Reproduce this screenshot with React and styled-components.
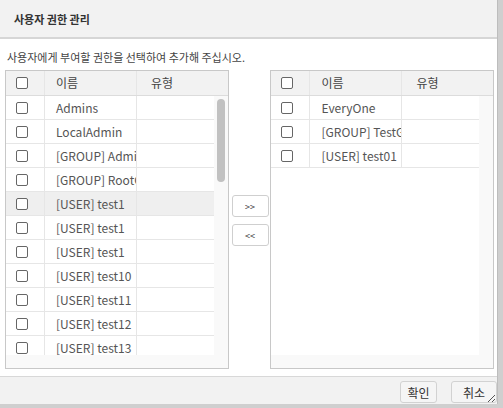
import React from 'react';
import styled, { createGlobalStyle, css } from 'styled-components';

const GlobalStyle = createGlobalStyle`
  html, body {
    margin: 0;
    padding: 0;
  }
  body {
    width: 503px;
    height: 408px;
    overflow: hidden;
    background: #cfcfcf;
    font-family: "Noto Sans CJK KR", "Noto Sans", sans-serif;
  }
`;

const leftRows = [
  'Admins',
  'LocalAdmin',
  '[GROUP] Administrators',
  '[GROUP] RootGroup',
  '[USER] test1',
  '[USER] test1',
  '[USER] test1',
  '[USER] test10',
  '[USER] test11',
  '[USER] test12',
  '[USER] test13',
];

const rightRows = ['EveryOne', '[GROUP] TestGroup', '[USER] test01'];

function List({ rows, selected, scroll }) {
  return (
    <Table>
      <HeadRow>
        <CheckCell><Box /></CheckCell>
        <NameCell head>이름</NameCell>
        <TypeCell head>유형</TypeCell>
      </HeadRow>
      <Middle>
        <Rows>
          {rows.map((name, i) => (
            <Row key={i} selected={i === selected}>
              <CheckCell><Box /></CheckCell>
              <NameCell>{name}</NameCell>
              <TypeCell />
            </Row>
          ))}
        </Rows>
        <VTrack>{scroll && <Thumb />}</VTrack>
      </Middle>
      <HTrack />
    </Table>
  );
}

export default function App() {
  return (
    <>
      <GlobalStyle />
      <Dialog>
        <TitleBar>사용자 권한 관리</TitleBar>
        <Body>
          <Guide>사용자에게 부여할 권한을 선택하여 추가해 주십시오.</Guide>
          <Lists>
            <List rows={leftRows} selected={4} scroll />
            <Mover>
              <MoveButton>&gt;&gt;</MoveButton>
              <MoveButton>&lt;&lt;</MoveButton>
            </Mover>
            <List rows={rightRows} />
          </Lists>
        </Body>
        <Footer>
          <FootButton width={37}>확인</FootButton>
          <FootButton width={46}>취소</FootButton>
          <Grip width="9" height="9" viewBox="0 0 9 9">
            <path d="M1 8L8 1M5 8L8 5" stroke="#555" strokeWidth="1" fill="none" />
          </Grip>
        </Footer>
      </Dialog>
    </>
  );
}

const Dialog = styled.div`
  position: relative;
  width: 498px;
  height: 404px;
  background: #fff;
  display: flex;
  flex-direction: column;
  box-sizing: border-box;
  border-right: 1px solid #bdbdbd;
`;

const TitleBar = styled.div`
  height: 37px;
  flex: none;
  display: flex;
  align-items: center;
  padding-left: 14px;
  background: #f2f2f2;
  border-bottom: 2px solid #d6d6d6;
  font-size: 11px;
  font-weight: 700;
  color: #333;
`;

const Body = styled.div`
  padding: 0 3px 0 5px;
`;

const Guide = styled.div`
  height: 31px;
  box-sizing: border-box;
  display: flex;
  align-items: flex-end;
  padding: 0 0 5px 2px;
  font-size: 11px;
  line-height: 16px;
  color: #444;
`;

const Lists = styled.div`
  display: flex;
  height: 299px;
`;

const Table = styled.div`
  width: 224px;
  height: 299px;
  box-sizing: border-box;
  border: 1px solid #c8c8c8;
  background: #f9f9f9;
  display: flex;
  flex-direction: column;
  overflow: hidden;
`;

const HeadRow = styled.div`
  display: flex;
  height: 24px;
  flex: none;
  background: #f2f2f2;
  border-bottom: 1px solid #dcdcdc;
  color: #444;
`;

const Middle = styled.div`
  flex: 1;
  display: flex;
  min-height: 0;
`;

const Rows = styled.div`
  flex: 1;
  background: #fff;
  overflow: hidden;
`;

const Row = styled.div`
  display: flex;
  height: 23px;
  border-bottom: 1px solid #e6e6e6;
  color: #555;
  ${p => p.selected && css`
    background: #efefef;
  `}
`;

const CheckCell = styled.div`
  width: 39px;
  flex: none;
  display: flex;
  align-items: center;
  padding-left: 10px;
  box-sizing: border-box;
  border-right: 1px solid #e6e6e6;
`;

const Box = styled.span`
  display: block;
  width: 12px;
  height: 12px;
  box-sizing: border-box;
  border: 1px solid #666;
  border-radius: 2px;
  background: #fff;
`;

const NameCell = styled.div`
  width: 92px;
  flex: none;
  box-sizing: border-box;
  padding-left: 11px;
  border-right: 1px solid #e6e6e6;
  font-size: 12px;
  line-height: ${p => (p.head ? '24px' : '23px')};
  white-space: nowrap;
  overflow: hidden;
`;

const TypeCell = styled.div`
  flex: 1;
  padding-left: 14px;
  font-size: 12px;
  line-height: 24px;
  white-space: nowrap;
  overflow: hidden;
`;

const VTrack = styled.div`
  width: 14px;
  flex: none;
  position: relative;
  padding-top: 3px;
  display: flex;
  justify-content: center;
`;

const Thumb = styled.div`
  width: 8px;
  height: 83px;
  border-radius: 4px;
  background: #c1c1c1;
`;

const HTrack = styled.div`
  height: 13px;
  flex: none;
`;

const Mover = styled.div`
  width: 42px;
  display: flex;
  flex-direction: column;
  align-items: center;
  justify-content: center;
  gap: 7px;
  padding-top: 2px;
  box-sizing: border-box;
`;

const MoveButton = styled.button`
  width: 37px;
  height: 22px;
  padding: 0;
  margin-left: 1px;
  background: #fff;
  border: 1px solid #cfcfcf;
  border-radius: 3px;
  font-family: "Noto Sans CJK KR", sans-serif;
  font-size: 9px;
  color: #333;
`;

const Footer = styled.div`
  margin-top: 7px;
  flex: 1;
  border-top: 1px solid #d8d8d8;
  background: #f2f2f2;
  display: flex;
  justify-content: flex-end;
  align-items: flex-start;
  gap: 14px;
  padding-top: 4px;
  box-sizing: border-box;
`;

const FootButton = styled.button`
  width: ${p => p.width}px;
  height: 22px;
  padding: 0;
  background: #f5f5f5;
  border: 1px solid #d2d2d2;
  border-radius: 3px;
  font-family: "Noto Sans CJK KR", sans-serif;
  font-size: 12px;
  color: #333;
`;

const Grip = styled.svg`
  position: absolute;
  right: 1px;
  bottom: 1px;
`;
